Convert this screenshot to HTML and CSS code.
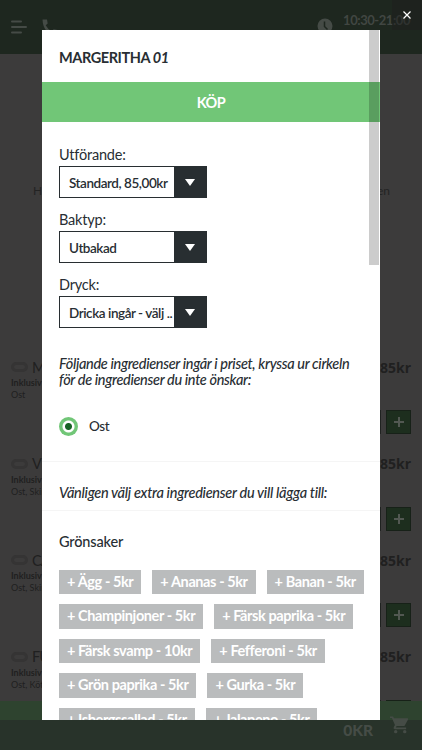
FILE: index.html
```html
<!DOCTYPE html>
<html lang="sv">

<head>
    <meta charset="UTF-8">
    <meta name="viewport" content="width=device-width, initial-scale=1.0">
    <title>Margeritha</title>
    <link rel="stylesheet" href="styles.css">
</head>

<body>
    <div class="page">
        <header class="header">
            <svg class="menu" width="16" height="14" viewBox="0 0 16 14">
                <path d="M1 1.5h9M1 7h14M1 12.5h9" stroke="currentColor" stroke-width="2" stroke-linecap="round" />
            </svg>
            <svg class="phone" width="16" height="16" viewBox="0 0 16 16">
                <path d="M0.5 0.5h4.5l0.7 4-2 1.800q2 4 6 6l2-2 4 .7v4.500Q1 15.500 .5 .5z" fill="currentColor" />
            </svg>
            <svg class="clock" width="16" height="16" viewBox="0 0 16 16">
                <circle cx="8" cy="8" r="7.500" fill="currentColor" />
                <path d="M7.500 3.500v5l3 3" fill="none" stroke="#1e261f" stroke-width="1.500" />
            </svg>
            <span class="hours">10:30-21:00</span>
        </header>

        <p class="intro"><span>Ha</span><span>en</span></p>

        <div class="row">
            <div class="row-top"><i class="tag"></i><span>M</span><b>85kr</b></div>
            <strong>Inklusiv</strong>
            <small>Ost</small>
            <div class="buy"><i class="amount"></i><i class="plus"></i></div>
        </div>
        <div class="row">
            <div class="row-top"><i class="tag"></i><span>V</span><b>85kr</b></div>
            <strong>Inklusiv</strong>
            <small>Ost, Skin</small>
            <div class="buy"><i class="amount"></i><i class="plus"></i></div>
        </div>
        <div class="row">
            <div class="row-top"><i class="tag"></i><span>CA</span><b>85kr</b></div>
            <strong>Inklusiv</strong>
            <small>Ost, Skin</small>
            <div class="buy"><i class="amount"></i><i class="plus"></i></div>
        </div>
        <div class="row">
            <div class="row-top"><i class="tag"></i><span>FU</span><b>85kr</b></div>
            <strong>Inklusiv</strong>
            <small>Ost, Köt</small>
            <div class="buy"><i class="amount"></i><i class="plus"></i></div>
        </div>
    </div>

    <footer class="cart">
        <span>0KR</span>
        <svg width="19" height="18" viewBox="0 0 20 18">
            <path d="M0 0h3.300l.9 2H18.500q1 .2.5 1.200l-3.300 6q-.5.9-1.600.9H7l-.9 1.600H17v1.700H5q-2-.4-1-2.300l1.200-2.200L2 1.700H0z" fill="currentColor" />
            <circle cx="6" cy="16" r="1.800" fill="currentColor" />
            <circle cx="15.500" cy="16" r="1.800" fill="currentColor" />
        </svg>
    </footer>

    <div class="close">
        <svg width="8" height="8" viewBox="0 0 8 8">
            <path d="M.5 .5l7 7M7.500 .5l-7 7" stroke="#fff" stroke-width="1.200" />
        </svg>
    </div>

    <div class="modal">
        <h1>MARGERITHA <em>01</em></h1>
        <button class="kop">KÖP</button>

        <div class="options">
            <label>Utförande:</label>
            <div class="select"><span>Standard, 85,00kr</span><i></i></div>
            <label>Baktyp:</label>
            <div class="select"><span>Utbakad</span><i></i></div>
            <label>Dryck:</label>
            <div class="select"><span>Dricka ingår - välj ..</span><i></i></div>
        </div>

        <p class="info">Följande ingredienser ingår i priset, kryssa ur cirkeln<br>för de ingredienser du inte önskar:</p>

        <div class="ingredient"><i class="circle"></i><span>Ost</span></div>

        <p class="extra">Vänligen välj extra ingredienser du vill lägga till:</p>

        <h2>Grönsaker</h2>
        <div class="chips">
            <div><span>+ Ägg - 5kr</span><span>+ Ananas - 5kr</span><span>+ Banan - 5kr</span></div>
            <div><span>+ Champinjoner - 5kr</span><span>+ Färsk paprika - 5kr</span></div>
            <div><span>+ Färsk svamp - 10kr</span><span>+ Fefferoni - 5kr</span></div>
            <div><span>+ Grön paprika - 5kr</span><span>+ Gurka - 5kr</span></div>
            <div><span>+ Isbergssallad - 5kr</span><span>+ Jalapeno - 5kr</span></div>
        </div>
        <div class="scroll"></div>
    </div>
</body>

</html>
```
FILE: styles.css
```css
* {
    padding: 0;
    margin: 0;
    box-sizing: border-box;
}

body {
    width: 422px;
    height: 750px;
    overflow: hidden;
    position: relative;
    background-color: #3c3b3b;
    font-family: Lato, sans-serif;
    color: #282e33;
}

i {
    font-style: normal;
}

.header {
    height: 54px;
    background-color: #1e271f;
    color: #454b46;
    display: flex;
    align-items: flex-start;
    padding: 17px 12px 0 11px;
}

.menu {
    margin-top: 3px;
}

.phone {
    margin: 2px 0 0 15px;
}

.clock {
    margin: 1px 10px 0 auto;
}

.hours {
    font-size: 13px;
    font-weight: 700;
    line-height: 7px;
    letter-spacing: -0.45px;
    color: #414642;
}

.intro {
    height: 304px;
    padding: 129px 32px 0 33px;
    display: flex;
    justify-content: space-between;
    font-size: 12px;
    color: #232323;
}

.row {
    height: 96.5px;
    padding: 0 11px;
    color: #202020;
}

.row-top {
    display: flex;
    align-items: center;
    height: 18px;
    font-size: 14.5px;
    letter-spacing: -0.9px;
}

.row-top b {
    margin-left: auto;
    font-family: "Open Sans", sans-serif;
    font-size: 14px;
    letter-spacing: 0;
}

.tag {
    width: 17px;
    height: 10px;
    border-radius: 5px;
    margin-right: 4px;
    border: 3px solid #353434;
}

.row strong,
.row small {
    display: block;
    font-size: 9px;
    line-height: 12px;
}

.row strong {
    margin-top: 1px;
}

.buy {
    display: flex;
    justify-content: flex-end;
    gap: 5px;
    margin-top: 9px;
}

.amount {
    width: 60px;
    height: 24px;
    background-color: #202321;
}

.plus {
    display: grid;
    place-items: center;
    width: 25px;
    height: 24px;
    background-color: #1d2e1e;
    border: 1px solid #172118;
}

.plus::before,
.plus::after {
    content: "";
    grid-area: 1 / 1;
    width: 10px;
    height: 2px;
    background-color: #525852;
}

.plus::after {
    width: 2px;
    height: 10px;
}

.cart {
    position: absolute;
    left: 0;
    bottom: 0;
    width: 422px;
    height: 49px;
    background: linear-gradient(#2e432f 19px, #28332a 19px);
    color: #454c46;
    display: flex;
    justify-content: flex-end;
    padding: 15px 13px 0 0;
    gap: 17px;
    font-weight: 900;
    font-size: 15.5px;
    line-height: 29px;
}

.close {
    position: absolute;
    right: 0;
    top: 0;
    width: 30px;
    height: 30px;
    background-color: rgba(30, 30, 30, 0.5);
    padding: 11px;
    line-height: 0;
}

.modal {
    position: absolute;
    left: 42px;
    top: 30px;
    width: 338px;
    height: 690px;
    overflow: hidden;
    background-color: #fff;
}

.modal h1 {
    height: 52px;
    padding-left: 17px;
    font-size: 14.5px;
    letter-spacing: -0.42px;
    line-height: 55px;
    font-weight: 700;
}

.kop {
    display: block;
    width: 100%;
    height: 40px;
    border: 0;
    background-color: #71c677;
    color: #fff;
    font: 700 14.5px Lato, sans-serif;
    letter-spacing: -0.5px;
}

.options {
    padding: 22px 17px 0;
}

.options label {
    display: block;
    height: 22px;
    font-size: 14.5px;
    letter-spacing: -0.2px;
    line-height: 21px;
}

.select {
    display: flex;
    width: 148px;
    height: 32px;
    margin-bottom: 11.2px;
    border: 1px solid #282e31;
    font-size: 13.5px;
    letter-spacing: -0.45px;
    font-weight: 600;
    line-height: 32px;
    white-space: nowrap;
}

.select span {
    flex: 1;
    min-width: 0;
    padding-left: 9px;
}

.select i {
    flex: none;
    width: 32px;
    background-color: #282e31;
}

.select i::before {
    content: "";
    display: block;
    margin: 12px auto 0;
    width: 0;
    border: 5.5px solid transparent;
    border-top: 7px solid #fff;
    border-bottom: 0;
}

.info {
    padding: 16px 17px 0;
    font-size: 14.5px;
    letter-spacing: -0.33px;
    line-height: 16px;
    font-style: italic;
    font-weight: 500;
    white-space: nowrap;
}

.ingredient {
    display: flex;
    align-items: center;
    gap: 11px;
    height: 74px;
    padding: 4px 17px 0;
    border-bottom: 1px solid #f5f5f5;
    font-size: 13.5px;
    letter-spacing: -0.4px;
    font-weight: 500;
}

.circle {
    width: 19px;
    height: 19px;
    border-radius: 50%;
    background: radial-gradient(#176325 3px, #fff 4px, #fff 5.5px, #71c677 6.5px);
}

.extra {
    height: 49px;
    padding: 0 17px;
    border-bottom: 1px solid #f5f5f5;
    font-size: 14.5px;
    letter-spacing: -0.28px;
    line-height: 62px;
    font-style: italic;
    font-weight: 500;
    white-space: nowrap;
}

.modal h2 {
    height: 59px;
    padding-left: 17px;
    font-size: 14.5px;
    letter-spacing: -0.15px;
    font-weight: 500;
    line-height: 61px;
}

.chips {
    padding-left: 17px;
}

.chips div {
    display: flex;
    gap: 11px;
    height: 34.6px;
}

.chips span {
    height: 24.5px;
    padding: 0 8px;
    background-color: #babcbd;
    color: #fff;
    font-size: 14.5px;
    letter-spacing: -0.41px;
    font-weight: 700;
    line-height: 24px;
    white-space: nowrap;
}

.scroll {
    position: absolute;
    right: 1px;
    top: 0;
    width: 10px;
    height: 235px;
    background-color: rgba(0, 0, 0, 0.2);
}
```
